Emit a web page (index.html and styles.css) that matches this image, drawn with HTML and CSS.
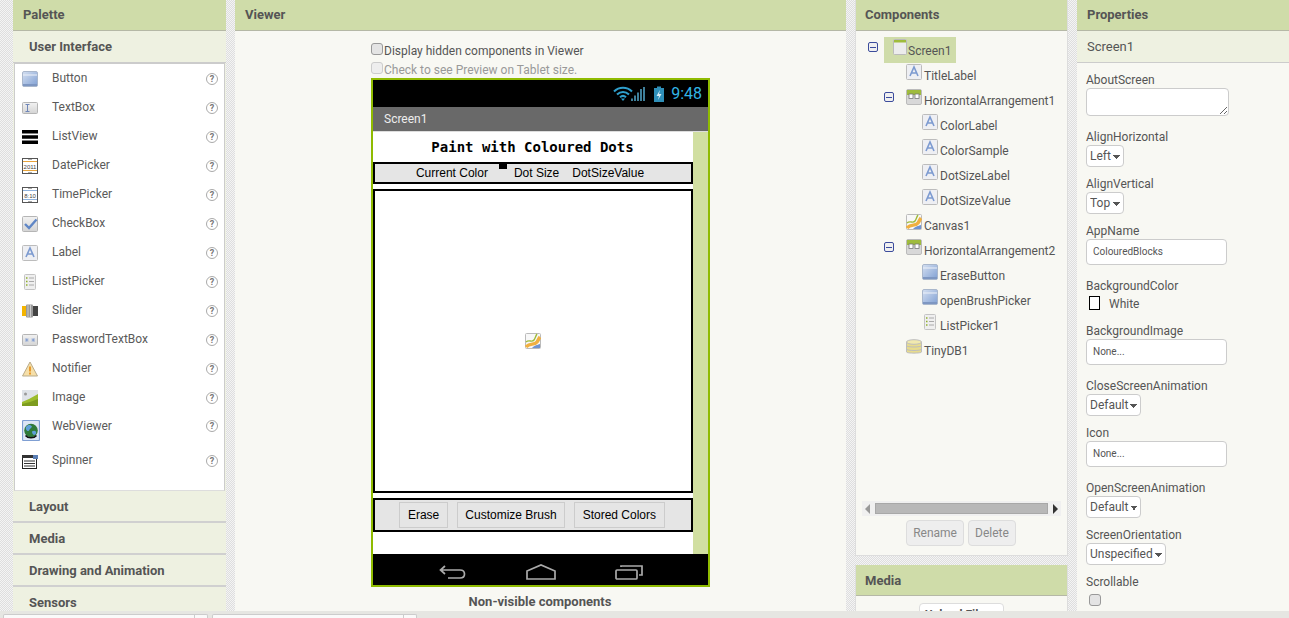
FILE: index.html
```html
<!DOCTYPE html>
<html>
<head>
	<meta charset="utf-8">
	<title>App Inventor Designer</title>
	<link rel="stylesheet" href="styles.css">
</head>
<body>

	<!-- icon sprite, 16x16 each -->
	<svg class="sprite" xmlns="http://www.w3.org/2000/svg">
		<defs>
			<linearGradient id="gBlue" x1="0" y1="0" x2="1" y2="1">
				<stop offset="0" stop-color="#d5e0f1"/>
				<stop offset="1" stop-color="#7f9fd3"/>
			</linearGradient>
			<linearGradient id="gGrey" x1="0" y1="0" x2="0" y2="1">
				<stop offset="0" stop-color="#f2f2f2"/>
				<stop offset="1" stop-color="#d4d4d4"/>
			</linearGradient>
		</defs>
		<symbol id="i-button" viewBox="0 0 16 16">
			<rect x="0.5" y="0.5" width="15" height="15" rx="1.5" fill="url(#gBlue)" stroke="#a9b7cc"/>
			<rect x="1" y="13" width="14" height="2" fill="#7e97c2"/>
			<path d="M1 4H15" stroke="#eef2f9"/>
		</symbol>
		<symbol id="i-textbox" viewBox="0 0 16 16">
			<rect x="0.5" y="2.5" width="15" height="11" rx="1" fill="url(#gGrey)" stroke="#b5b5b5"/>
			<path d="M3.5 4.5H7.5M3.5 11.5H7.5M5.5 4.5V11.5" stroke="#6f86b8" fill="none"/>
		</symbol>
		<symbol id="i-listview" viewBox="0 0 16 16">
			<path d="M0 2.7H16M0 8H16M0 13.3H16" stroke="#000" stroke-width="3.4"/>
		</symbol>
		<symbol id="i-picker-date" viewBox="0 0 16 16">
			<rect x="0.5" y="0.5" width="15" height="15" fill="#fff" stroke="#555"/>
			<path d="M1 3.5H15M1 12.5H15" stroke="#e8a43c"/>
			<path d="M6.5 2L8 0.5 9.5 2M6.5 14L8 15.5 9.5 14" stroke="#555" fill="none"/>
		</symbol>
		<symbol id="i-picker-time" viewBox="0 0 16 16">
			<rect x="0.5" y="0.5" width="15" height="15" fill="#fff" stroke="#555"/>
			<path d="M1 3.5H15M1 12.5H15" stroke="#8fb2dd"/>
			<path d="M6.5 2L8 0.5 9.5 2M6.5 14L8 15.5 9.5 14" stroke="#555" fill="none"/>
		</symbol>
		<symbol id="i-checkbox" viewBox="0 0 16 16">
			<rect x="0.5" y="0.5" width="15" height="15" rx="1" fill="url(#gGrey)" stroke="#b5b5b5"/>
			<path d="M3 8L7 12 14.5 3.5" stroke="#5f86c6" stroke-width="2.4" fill="none"/>
		</symbol>
		<symbol id="i-label" viewBox="0 0 16 16">
			<rect x="0.5" y="0.5" width="15" height="15" rx="1" fill="#eeeff3" stroke="#bcbcbc"/>
			<path d="M4 12L8 3 12 12M5.5 9H10.5" stroke="#7c9ad0" stroke-width="1.6" fill="none"/>
		</symbol>
		<symbol id="i-listpicker" viewBox="0 0 16 16">
			<rect x="2.5" y="0.5" width="11" height="15" rx="1" fill="#efefef" stroke="#c4c4c4"/>
			<path d="M4 4H5.5M4 7.5H5.5M4 11H5.5" stroke="#8fb02c" stroke-width="1.5"/>
			<path d="M7 4H12M7 7.5H12M7 11H12" stroke="#aaa"/>
		</symbol>
		<symbol id="i-slider" viewBox="0 0 16 16">
			<rect x="0" y="3" width="5" height="10" fill="#f4b400"/>
			<rect x="10" y="3" width="6" height="10" fill="#444"/>
			<rect x="4" y="1.5" width="7" height="13" rx="1" fill="#999"/>
			<path d="M6 2V14M8.5 2V14" stroke="#ccc"/>
		</symbol>
		<symbol id="i-password" viewBox="0 0 16 16">
			<rect x="0.5" y="2.5" width="15" height="11" rx="1" fill="url(#gGrey)" stroke="#b5b5b5"/>
			<path d="M3 8H6.5M4.75 6.2V9.8M3.5 6.5L6 9.5M6 6.5L3.5 9.5M9.5 8H13M11.25 6.2V9.8M10 6.5L12.5 9.5M12.5 6.5L10 9.5" stroke="#7d9ad0" stroke-width="0.7"/>
		</symbol>
		<symbol id="i-notifier" viewBox="0 0 16 16">
			<path d="M8 1L15.5 15H0.5Z" fill="#f6dfa8" stroke="#b9ab8b"/>
			<path d="M8 5.5V10.5" stroke="#e89a2c" stroke-width="2"/>
			<path d="M8 11.5V13.5" stroke="#e89a2c" stroke-width="2"/>
		</symbol>
		<symbol id="i-image" viewBox="0 0 16 16">
			<rect x="0" y="0" width="16" height="16" fill="#dfe3e8"/>
			<circle cx="3.5" cy="4" r="1.5" fill="#9a9a9a"/>
			<path d="M0 12L7 9 16 4V16H0Z" fill="#9cbc2e"/>
			<path d="M0 14L8 12 16 9V16H0Z" fill="#7d9c1f"/>
		</symbol>
		<symbol id="i-webviewer" viewBox="0 0 18 21">
			<rect x="0.5" y="0.5" width="17" height="20" rx="1" fill="#dce6f5" stroke="#7f9fd3" stroke-width="1.2"/>
			<circle cx="9" cy="10.5" r="6.8" fill="#2f7a3a"/>
			<path d="M4 7C6 4 9 5 10 6.5 9 9 8 8 7 10.5 6 12 3 10 4 7ZM10 11.5C12 10 15 11 14 13.5 13 16 10 15 10 11.5Z" fill="#5d9fd8"/>
			<path d="M3.5 15.5C6 18.5 12 18.5 14.5 15.5" stroke="#111" stroke-width="1.6" fill="none"/>
		</symbol>
		<symbol id="i-spinner" viewBox="0 0 16 16">
			<rect x="0.5" y="1.5" width="14" height="13" fill="#fff" stroke="#222"/>
			<rect x="0" y="1" width="15" height="3" fill="#333"/>
			<rect x="11" y="1" width="5" height="4" fill="#5b7fb5"/>
			<path d="M2 7H13M2 9.5H13M2 12H13" stroke="#333"/>
		</symbol>
		<symbol id="i-screen" viewBox="0 0 16 16">
			<rect x="1.5" y="0.5" width="13" height="15" rx="1" fill="#ececec" stroke="#bbb"/>
			<rect x="2" y="1" width="12" height="2.5" fill="#9fbc3c"/>
		</symbol>
		<symbol id="i-harr" viewBox="0 0 16 16">
			<rect x="0.5" y="0.5" width="15" height="15" rx="1.5" fill="#d8d8d8" stroke="#bbb"/>
			<rect x="1" y="1" width="14" height="5" fill="#9fbc3c"/>
			<rect x="3" y="5" width="4" height="4.5" fill="#fff" stroke="#777" stroke-width="0.8"/>
			<rect x="9" y="5" width="4" height="4.5" fill="#fff" stroke="#777" stroke-width="0.8"/>
		</symbol>
		<symbol id="i-canvas" viewBox="0 0 16 16">
			<rect x="0.5" y="0.5" width="15" height="15" rx="1" fill="#f8f8f8" stroke="#bbb"/>
			<path d="M7 15C10 12 12 12 15 11V15Z" fill="#6f93cf"/>
			<path d="M1 9C4 6 7 10 9 7 10.5 5 10.5 3 12 1" stroke="#9fbc3c" stroke-width="1.4" fill="none"/>
			<path d="M1 14C5 9 9 13 12 9 13.5 7 14 5 15 4" stroke="#f0b040" stroke-width="3.4" fill="none"/>
		</symbol>
		<symbol id="i-tinydb" viewBox="0 0 16 16">
			<path d="M0.5 3V13C0.5 14.5 15.5 14.5 15.5 13V3Z" fill="#e8dc8c" stroke="#bdbdbd"/>
			<ellipse cx="8" cy="3" rx="7.5" ry="2.3" fill="#f1e9ae" stroke="#bdbdbd"/>
			<path d="M0.5 6.5C0.5 8.5 15.5 8.5 15.5 6.5M0.5 10C0.5 12 15.5 12 15.5 10" stroke="#bdbdbd" fill="none"/>
		</symbol>
	</svg>

	<div class="main">

		<div class="panel palette">
			<div class="head">Palette</div>
			<div class="sub">User Interface</div>
			<ul class="drawer">
				<li><svg class="ic"><use href="#i-button"/></svg><span>Button</span><i class="help">?</i></li>
				<li><svg class="ic"><use href="#i-textbox"/></svg><span>TextBox</span><i class="help">?</i></li>
				<li><svg class="ic"><use href="#i-listview"/></svg><span>ListView</span><i class="help">?</i></li>
				<li><svg class="ic" viewBox="0 0 16 16"><use href="#i-picker-date"/><text x="8" y="10.6" class="icon-text">2011</text></svg><span>DatePicker</span><i class="help">?</i></li>
				<li><svg class="ic" viewBox="0 0 16 16"><use href="#i-picker-time"/><text x="8" y="10.6" class="icon-text">8:10</text></svg><span>TimePicker</span><i class="help">?</i></li>
				<li><svg class="ic"><use href="#i-checkbox"/></svg><span>CheckBox</span><i class="help">?</i></li>
				<li><svg class="ic"><use href="#i-label"/></svg><span>Label</span><i class="help">?</i></li>
				<li><svg class="ic"><use href="#i-listpicker"/></svg><span>ListPicker</span><i class="help">?</i></li>
				<li><svg class="ic"><use href="#i-slider"/></svg><span>Slider</span><i class="help">?</i></li>
				<li><svg class="ic"><use href="#i-password"/></svg><span>PasswordTextBox</span><i class="help">?</i></li>
				<li><svg class="ic"><use href="#i-notifier"/></svg><span>Notifier</span><i class="help">?</i></li>
				<li><svg class="ic"><use href="#i-image"/></svg><span>Image</span><i class="help">?</i></li>
				<li class="tall"><svg class="ic ic-web"><use href="#i-webviewer"/></svg><span>WebViewer</span><i class="help">?</i></li>
				<li><svg class="ic ic-spin"><use href="#i-spinner"/></svg><span>Spinner</span><i class="help">?</i></li>
			</ul>
			<div class="section">Layout</div>
			<div class="section">Media</div>
			<div class="section">Drawing and Animation</div>
			<div class="section">Sensors</div>
		</div>

		<div class="panel viewer">
			<div class="head">Viewer</div>
			<div class="viewer-body">
				<label class="opt"><input type="checkbox" class="check">Display hidden components in Viewer</label>
				<label class="opt off"><input type="checkbox" class="check" disabled>Check to see Preview on Tablet size.</label>

				<div class="phone">
					<div class="status">
						<svg class="status-icons" width="52" height="16" viewBox="0 0 52 16">
							<path d="M1 5.5C6 0.5 14 0.5 19 5.5M4 8.5C7.5 5 12.5 5 16 8.5M7 11.2C9 9.4 11 9.4 13 11.2" stroke="#2f9fcc" stroke-width="2" fill="none"/>
							<path d="M10 15L8 12.5H12Z" fill="#2f9fcc"/>
							<path d="M18 15H20V12.5H18ZM21 15H23V9.5H21ZM24 15H26V6.5H24ZM27 15H29V3H27ZM30 15H32V1H30Z" fill="#3f7f99"/>
							<rect x="41" y="2" width="10" height="14" fill="#2f8fb8"/>
							<rect x="44" y="0.5" width="4" height="2" fill="#2f8fb8"/>
							<path d="M47 4L43.5 10H46L45 14 48.5 8H46Z" fill="#d8eef6"/>
						</svg>
						<span class="clock">9:48</span>
					</div>
					<div class="titlebar">Screen1</div>
					<div class="phone-body">
						<div class="screen">
							<div class="app-title">Paint with Coloured Dots</div>
							<div class="arrange arrange-top">
								<span>Current Color</span>
								<span class="sample"></span>
								<span>Dot Size</span>
								<span>DotSizeValue</span>
							</div>
							<div class="canvas"><svg class="ic"><use href="#i-canvas"/></svg></div>
							<div class="arrange arrange-btns">
								<button class="mock-btn">Erase</button>
								<button class="mock-btn">Customize Brush</button>
								<button class="mock-btn">Stored Colors</button>
							</div>
						</div>
						<div class="scroll-side"></div>
					</div>
					<div class="navbar">
						<svg width="28" height="16" viewBox="0 0 28 16"><path d="M6 2L1.5 6 6 10M2 6H21C27 6 27 14 21 14H9" stroke="#aaa" stroke-width="1.7" fill="none"/></svg>
						<svg width="30" height="16" viewBox="0 0 30 16"><path d="M1 7L15 1 29 7V15H1Z" stroke="#aaa" stroke-width="1.7" fill="none"/></svg>
						<svg width="28" height="16" viewBox="0 0 28 16"><rect x="1" y="6" width="21" height="9" rx="1" stroke="#aaa" stroke-width="1.7" fill="none"/><path d="M6 3V2H27V11H24" stroke="#aaa" stroke-width="1.7" fill="none"/></svg>
					</div>
				</div>

				<div class="nonvisible">Non-visible components</div>
			</div>
		</div>

		<div class="side">
			<div class="panel components">
				<div class="head">Components</div>
				<div class="tree">
					<div class="node root"><b class="toggle"></b><span class="picked"><svg class="ic"><use href="#i-screen"/></svg>Screen1</span></div>
					<div class="node lv1"><b class="nub"></b><svg class="ic"><use href="#i-label"/></svg>TitleLabel</div>
					<div class="node lv1"><b class="toggle"></b><svg class="ic"><use href="#i-harr"/></svg>HorizontalArrangement1</div>
					<div class="node lv2"><b class="nub"></b><svg class="ic"><use href="#i-label"/></svg>ColorLabel</div>
					<div class="node lv2"><b class="nub"></b><svg class="ic"><use href="#i-label"/></svg>ColorSample</div>
					<div class="node lv2"><b class="nub"></b><svg class="ic"><use href="#i-label"/></svg>DotSizeLabel</div>
					<div class="node lv2"><b class="nub"></b><svg class="ic"><use href="#i-label"/></svg>DotSizeValue</div>
					<div class="node lv1"><b class="nub"></b><svg class="ic"><use href="#i-canvas"/></svg>Canvas1</div>
					<div class="node lv1"><b class="toggle"></b><svg class="ic"><use href="#i-harr"/></svg>HorizontalArrangement2</div>
					<div class="node lv2"><b class="nub"></b><svg class="ic"><use href="#i-button"/></svg>EraseButton</div>
					<div class="node lv2"><b class="nub"></b><svg class="ic"><use href="#i-button"/></svg>openBrushPicker</div>
					<div class="node lv2"><b class="nub"></b><svg class="ic"><use href="#i-listpicker"/></svg>ListPicker1</div>
					<div class="node lv1"><b class="nub"></b><svg class="ic"><use href="#i-tinydb"/></svg>TinyDB1</div>
				</div>
				<div class="hscroll">
					<span class="arrow-l"></span>
					<span class="thumb"></span>
					<span class="arrow-r"></span>
				</div>
				<div class="tree-btns">
					<button class="dim-btn">Rename</button>
					<button class="dim-btn">Delete</button>
				</div>
			</div>
			<div class="panel media">
				<div class="head">Media</div>
				<div class="media-body"><button class="upload">Upload File ...</button></div>
			</div>
		</div>

		<div class="panel props">
			<div class="head">Properties</div>
			<div class="sub plain">Screen1</div>
			<div class="prop-list">
				<div class="prop wide-gap"><label>AboutScreen</label><textarea class="p-area"></textarea></div>
				<div class="prop"><label>AlignHorizontal</label><select class="p-sel sel-s"><option>Left</option></select></div>
				<div class="prop"><label>AlignVertical</label><select class="p-sel sel-s"><option>Top</option></select></div>
				<div class="prop wide-gap"><label>AppName</label><input class="p-text" type="text" value="ColouredBlocks"></div>
				<div class="prop wide-gap"><label>BackgroundColor</label><div class="color"><span class="swatch"></span><span class="color-name">White</span></div></div>
				<div class="prop wide-gap"><label>BackgroundImage</label><input class="p-text" type="text" value="None..."></div>
				<div class="prop"><label>CloseScreenAnimation</label><select class="p-sel sel-m"><option>Default</option></select></div>
				<div class="prop wide-gap"><label>Icon</label><input class="p-text" type="text" value="None..."></div>
				<div class="prop"><label>OpenScreenAnimation</label><select class="p-sel sel-m"><option>Default</option></select></div>
				<div class="prop"><label>ScreenOrientation</label><select class="p-sel sel-l"><option>Unspecified</option></select></div>
				<div class="prop"><label>Scrollable</label><input type="checkbox" class="check scroll-check"></div>
			</div>
		</div>

	</div>

	<div class="tabs">
		<span class="tab"></span><span class="tab tab-end"></span>
		<span class="tab second"></span><span class="tab tab-end"></span>
	</div>

</body>
</html>
```

FILE: styles.css
```css
*{
	box-sizing: border-box;
}
html, body{
	margin: 0;
	padding: 0;
	height: 618px;
	overflow: hidden;
}
body{
	font-family: Roboto, sans-serif;
	font-size: 12px;
	color: #555;
	background: repeating-conic-gradient(#dedede 0 25%, #f4f4f4 0 50%) 0 0 / 2px 2px;
}
.sprite{
	position: absolute;
	width: 0;
	height: 0;
}
.icon-text{
	font-family: "Liberation Sans", sans-serif;
	font-size: 6px;
	text-anchor: middle;
	fill: #444;
}
.ic{
	width: 16px;
	height: 16px;
	flex: none;
}

/* columns */
.main{
	display: flex;
	gap: 9px;
	height: 611px;
	padding-left: 13px;
	overflow: hidden;
}
.panel{
	background: #f8f8f3;
	display: flex;
	flex-direction: column;
	overflow: hidden;
}
.palette, .components, .media{
	width: 213px;
}
.viewer{
	width: 611px;
}
.props{
	width: 212px;
}
.side{
	display: flex;
	flex-direction: column;
	gap: 9px;
	height: 611px;
}
.head{
	height: 31px;
	flex: none;
	padding-left: 10px;
	line-height: 29px;
	font-size: 13px;
	font-weight: bold;
	background: #cfdca9;
	border-bottom: 1px solid #b5b8a6;
}
.sub{
	height: 32px;
	flex: none;
	padding-left: 16px;
	line-height: 32px;
	font-size: 13px;
	font-weight: bold;
	background: #eef1e1;
	border-bottom: 1px solid #ccc;
}
.sub.plain{
	padding-left: 10px;
	font-weight: normal;
}

/* palette */
.palette{
	background: #eef1e1;
}
.drawer{
	list-style: none;
	margin: 0 1px;
	padding: 0;
	height: 428px;
	flex: none;
	background: #fff;
	border: 1px solid #ccc;
	border-bottom-color: #ddd;
}
.drawer li{
	height: 29px;
	display: flex;
	align-items: center;
	padding: 0 6px 0 7px;
}
.drawer li span{
	margin-left: 14px;
	margin-top: -2px;
	flex: 1;
	color: #5a5a5a;
}
.drawer li.tall{
	height: 34px;
	align-items: flex-start;
	padding-top: 8px;
}
.drawer li.tall span{
	margin: -1px 0 0 12px;
}
.ic-web{
	width: 18px;
	height: 21px;
}
.ic-spin{
	margin-top: 3px;
}
.help{
	width: 12px;
	height: 12px;
	border: 1px solid #aaa;
	border-radius: 50%;
	font-style: normal;
	font-weight: bold;
	font-size: 9px;
	line-height: 10px;
	text-align: center;
	color: #777;
}
.section{
	height: 32px;
	flex: none;
	padding-left: 16px;
	line-height: 32px;
	font-size: 13px;
	font-weight: bold;
	background: #eef1e1;
	border-bottom: 2px solid #d0d0d0;
}

/* viewer */
.viewer-body{
	flex: 1;
	display: flex;
	flex-direction: column;
	align-items: center;
	padding-top: 9px;
}
.opt{
	width: 339px;
	height: 20px;
	display: flex;
	align-items: center;
	padding-top: 1px;
}
.opt.off{
	height: 18px;
	color: #999;
}
.check{
	appearance: none;
	-webkit-appearance: none;
	width: 12px;
	height: 12px;
	margin: -3px 1px 0 0;
	background: #e4e4e4;
	border: 1px solid #999;
	border-radius: 3px;
}
.check:disabled{
	background: #eee;
	border-color: #ccc;
}
.phone{
	width: 339px;
	height: 509px;
	flex: none;
	border: 2px solid #8fbb00;
	display: flex;
	flex-direction: column;
}
.status{
	height: 27px;
	flex: none;
	background: #000;
	display: flex;
	align-items: center;
	justify-content: flex-end;
	padding-right: 6px;
}
.status-icons{
	margin-right: 6px;
}
.clock{
	font-size: 16px;
	color: #33b5e5;
}
.titlebar{
	height: 25px;
	flex: none;
	background: #696969;
	border-bottom: 1px solid #ddd;
	color: #eee;
	line-height: 24px;
	padding-left: 11px;
}
.phone-body{
	flex: 1;
	display: flex;
	min-height: 0;
}
.screen{
	width: 320px;
	background: #fff;
	font-family: "Liberation Sans", sans-serif;
	color: #000;
}
.scroll-side{
	flex: 1;
	background: #d1dfa1;
}
.app-title{
	height: 30px;
	padding: 7px 1px 0 0;
	line-height: 17px;
	text-align: center;
	font-family: "DejaVu Sans Mono", monospace;
	font-weight: bold;
	font-size: 14px;
}
.arrange{
	background: #e5e5e5;
	border: 2px solid #000;
	display: flex;
	justify-content: center;
}
.arrange-top{
	height: 22px;
	align-items: center;
	gap: 7px;
	padding-right: 6px;
}
.arrange-top span:last-child{
	margin-left: 6px;
}
.sample{
	width: 8px;
	height: 5px;
	background: #000;
	align-self: flex-start;
	margin: 0 0 0 4px;
}
.canvas{
	height: 304px;
	margin-top: 5px;
	background: #fff;
	border: 2px solid #000;
	display: flex;
	align-items: center;
	justify-content: center;
}
.arrange-btns{
	height: 34px;
	margin-top: 5px;
	padding-right: 2px;
	align-items: center;
	gap: 9px;
}
.mock-btn{
	height: 26px;
	padding: 0 7.5px;
	font-family: "Liberation Sans", sans-serif;
	font-size: 12px;
	color: #000;
	background: #e5e5e5;
	border: 1px solid #ccc;
}
.navbar{
	height: 31px;
	flex: none;
	background: #000;
	display: flex;
	align-items: center;
	padding: 4px 65px 0 66px;
	justify-content: space-between;
}
.nonvisible{
	margin-top: 7px;
	padding-right: 1px;
	font-size: 13px;
	font-weight: bold;
	line-height: 15px;
}

/* components */
.components{
	height: 556px;
	flex: none;
	border: 1px solid #ddd;
	border-top: 0;
}
.components .head{
	margin: 0 -1px;
}
.tree{
	flex: 1;
	padding-top: 6px;
}
.node{
	height: 25px;
	display: flex;
	align-items: center;
	padding-top: 2px;
	color: #555;
}
.node .ic{
	margin: -7px 2px 0 0;
}
.root{
	padding-left: 12px;
	padding-top: 0;
}
.lv1{
	padding-left: 28px;
}
.lv2{
	padding-left: 44px;
}
.toggle, .nub{
	width: 10px;
	height: 10px;
	flex: none;
	margin: -7px 12px 0 0;
}
.toggle{
	border: 1px solid #3c4c9c;
	border-radius: 2px;
	background: linear-gradient(#3c4c9c, #3c4c9c) center / 6px 1px no-repeat #f0f0f0;
}
.root .toggle{
	margin: -5px 6px 0 0;
}
.picked{
	display: flex;
	align-items: center;
	height: 26px;
	padding: 2px 5px 0 8px;
	background: #cfdca9;
}
.node .picked .ic{
	margin: -7px 0 0 0;
}
.hscroll{
	height: 15px;
	margin: 0 6px;
	flex: none;
	background: #f0f0f0;
	display: flex;
	align-items: center;
	gap: 4px;
	padding: 0 3px;
}
.thumb{
	flex: 1;
	height: 11px;
	margin: 0 1px;
	background: #b8b8b8;
	border: 1px solid #a8a8a8;
}
.arrow-l, .arrow-r{
	width: 0;
	height: 0;
	border: 5px solid transparent;
}
.arrow-l{
	border-left: 0;
	border-right-color: #999;
}
.arrow-r{
	border-right: 0;
	border-left-color: #333;
}
.tree-btns{
	display: flex;
	justify-content: center;
	gap: 4px;
	padding: 4px 1px 9px 0;
	flex: none;
}
.dim-btn{
	height: 26px;
	padding: 0 6px;
	font-family: Roboto, sans-serif;
	font-size: 12px;
	color: #888;
	background: #eee;
	border: 1px solid #ddd;
	border-radius: 4px;
}
.media{
	height: 46px;
	flex: none;
	border-left: 1px solid #ddd;
	border-right: 1px solid #ddd;
}
.media .head{
	margin: 0 -1px;
	line-height: 31px;
}
.media-body{
	text-align: center;
	padding-top: 7px;
}
.upload{
	width: 85px;
	height: 24px;
	font-family: Roboto, sans-serif;
	font-size: 12px;
	font-weight: bold;
	color: #555;
	background: #fff;
	border: 1px solid #ddd;
	border-radius: 4px;
	padding: 0;
}

/* properties */
.prop-list{
	padding: 9px 0 0 9px;
}
.prop{
	margin-bottom: 9px;
}
.prop.wide-gap{
	margin-bottom: 13px;
}
.prop label{
	display: block;
	height: 14px;
	line-height: 16px;
	margin-bottom: 2px;
	color: #555;
}
.p-area{
	display: block;
	width: 143px;
	height: 28px;
	margin: 0;
	padding: 0;
	background: #fff;
	border: 1px solid #ccc;
	border-radius: 4px;
}
.p-sel{
	appearance: none;
	-webkit-appearance: none;
	display: block;
	height: 22px;
	padding: 0 0 0 3px;
	font-family: Roboto, sans-serif;
	font-size: 12px;
	color: #555;
	background-color: #fff;
	background-image: linear-gradient(45deg, transparent 50%, #555 50%), linear-gradient(-45deg, transparent 50%, #555 50%);
	background-size: 4px 4px, 4px 4px;
	background-repeat: no-repeat;
	border: 1px solid #ccc;
	border-radius: 4px;
}
.sel-s{
	width: 38px;
	background-position: 26px 9px, 30px 9px;
}
.sel-m{
	width: 55px;
	background-position: 43px 9px, 47px 9px;
}
.sel-l{
	width: 80px;
	background-position: 68px 9px, 72px 9px;
}
.p-text{
	display: block;
	width: 141px;
	height: 26px;
	padding: 0 6px 2px;
	font-family: Roboto, sans-serif;
	font-size: 10px;
	color: #555;
	background: #fff;
	border: 1px solid #ccc;
	border-radius: 4px;
}
.color{
	display: flex;
	align-items: center;
	height: 14px;
	padding-left: 3px;
}
.swatch{
	width: 11px;
	height: 14px;
	background: #fff;
	border: 1px solid #000;
	margin-right: 9px;
}
.color-name{
	margin-top: 1px;
}
.prop label + .color{
	margin-top: 4px;
}
.prop:has(.color) label{
	margin-bottom: 0;
}
.scroll-check{
	display: block;
	margin: 6px 0 0 3px;
}

/* browser tabs strip along the bottom */
.tabs{
	height: 7px;
	background: #e6e6e2;
	display: flex;
	padding: 3px 0 0 3px;
}
.tab{
	width: 192px;
	height: 4px;
	background: #fafafa;
	border: 1px solid #ccc;
	border-bottom: 0;
	border-radius: 2px 0 0 0;
}
.tab-end{
	width: 13px;
	border-radius: 0 2px 0 0;
	border-left: 0;
}
.second{
	margin-left: 4px;
}
```
